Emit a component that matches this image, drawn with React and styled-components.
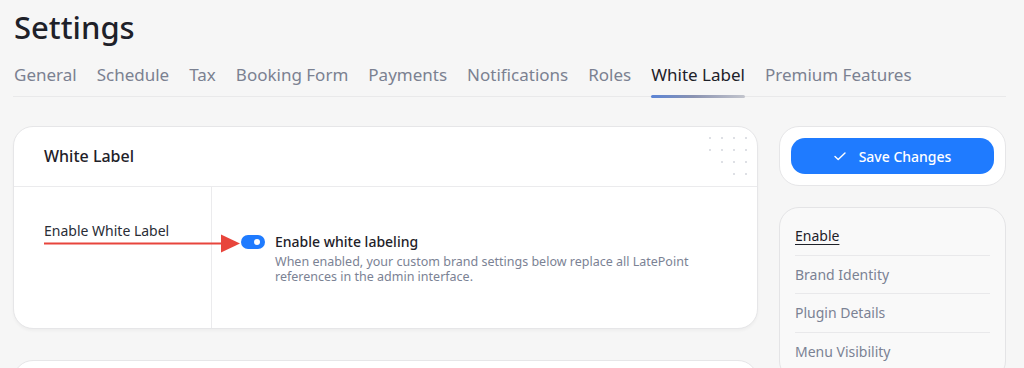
import React from "react";
import styled, { createGlobalStyle } from "styled-components";

const GlobalStyle = createGlobalStyle`
  html, body { margin: 0; padding: 0; }
  body {
    background: #f6f6f6;
    font-family: "Noto Sans", "Open Sans", sans-serif;
    color: #1e2129;
    -webkit-font-smoothing: antialiased;
  }
  * { box-sizing: border-box; }
`;

const Page = styled.div`
  padding: 7px 18px 0 13px;
`;

const Title = styled.h1`
  margin: 0 0 0 1px;
  font-size: 31px;
  line-height: 40px;
  font-weight: 500;
  color: #1e2129;
`;

const TabBar = styled.nav`
  display: flex;
  gap: 20px;
  margin-top: 16px;
  padding-left: 1px;
  border-bottom: 1px solid #e9e9ea;
`;

const Tab = styled.div`
  position: relative;
  font-size: 17px;
  line-height: 24px;
  padding-bottom: 9px;
  color: ${(p) => (p.$active ? "#1e2129" : "#7b8191")};
  font-weight: 400;
  white-space: nowrap;
  &::after {
    content: "";
    display: ${(p) => (p.$active ? "block" : "none")};
    position: absolute;
    left: 0;
    right: 0;
    bottom: -2px;
    height: 3px;
    border-radius: 2px;
    background: linear-gradient(90deg, #5b84d6 0%, #8a93b2 45%, #c3c5cd 100%);
  }
`;

const Layout = styled.div`
  display: grid;
  grid-template-columns: 745px 227px;
  column-gap: 21px;
  margin-top: 29px;
`;

const MainColumn = styled.div`
  display: flex;
  flex-direction: column;
  gap: 31px;
`;

const Card = styled.section`
  position: relative;
  background: #ffffff;
  border: 1px solid #e6e6e8;
  border-radius: 20px;
  box-shadow: 0 2px 3px rgba(0, 0, 0, 0.035);
  min-height: ${(p) => p.$minHeight || "auto"};
`;

const CardHeader = styled.header`
  position: relative;
  height: 60px;
  display: flex;
  align-items: center;
  padding: 0 30px 1px;
  border-bottom: 1px solid #ebebed;
  font-size: 16px;
  font-weight: 500;
  color: #1e2129;
`;

const Dots = styled.svg`
  position: absolute;
  top: 0;
  right: 0;
`;

const CardBody = styled.div`
  position: relative;
  display: grid;
  grid-template-columns: 198px 1fr;
  height: 141px;
`;

const LabelCell = styled.div`
  border-right: 1px solid #ebebed;
  padding: 34px 0 0 30px;
  font-size: 14px;
  line-height: 20px;
  color: #2a2d36;
`;

const FieldCell = styled.div`
  display: flex;
  align-items: center;
  padding: 0 30px 0 29px;
`;

const ToggleRow = styled.div`
  display: flex;
  align-items: flex-start;
  gap: 10px;
  margin-top: 1px;
`;

const Toggle = styled.div`
  position: relative;
  flex: none;
  width: 24px;
  height: 14px;
  margin-top: 3px;
  border-radius: 7px;
  background: #1f7bff;
  &::after {
    content: "";
    position: absolute;
    top: 4px;
    right: 5px;
    width: 6px;
    height: 6px;
    border-radius: 50%;
    background: #ffffff;
  }
`;

const FieldText = styled.div`
  display: flex;
  flex-direction: column;
  gap: 2px;
`;

const FieldTitle = styled.div`
  font-size: 14px;
  line-height: 20px;
  font-weight: 500;
  color: #1e2129;
`;

const FieldDesc = styled.div`
  font-size: 12.5px;
  line-height: 15.5px;
  color: #7b8294;
  max-width: 420px;
`;

const Arrow = styled.svg`
  position: absolute;
  left: 30px;
  top: 47px;
  pointer-events: none;
`;

const SideColumn = styled.aside`
  display: flex;
  flex-direction: column;
  gap: 21px;
`;

const SaveCard = styled.div`
  background: #ffffff;
  border: 1px solid #e6e6e8;
  border-radius: 20px;
  padding: 11px 11px;
`;

const SaveButton = styled.button`
  width: 100%;
  height: 36px;
  border: none;
  border-radius: 14px;
  background: #1f7bff;
  color: #ffffff;
  font-family: inherit;
  font-size: 14px;
  font-weight: 500;
  display: flex;
  align-items: center;
  justify-content: center;
  gap: 13px;
  padding: 0;
  cursor: pointer;
`;

const NavCard = styled.nav`
  background: #f9f9f9;
  border: 1px solid #e4e4e6;
  border-radius: 20px;
  padding: 9px 15px 10px 15px;
`;

const NavItem = styled.div`
  font-size: 14px;
  line-height: 16px;
  padding: 11px 0 10.5px;
  border-bottom: 1px solid #e9e9eb;
  color: ${(p) => (p.$active ? "#1e2129" : "#7b8294")};
  text-decoration: ${(p) => (p.$active ? "underline" : "none")};
  text-underline-offset: 3px;
  text-decoration-thickness: 1px;
  &:last-child { border-bottom: none; }
`;

const tabs = [
  "General",
  "Schedule",
  "Tax",
  "Booking Form",
  "Payments",
  "Notifications",
  "Roles",
  "White Label",
  "Premium Features",
];

const navItems = ["Enable", "Brand Identity", "Plugin Details", "Menu Visibility"];

function DotPattern() {
  const rows = [
    [13, 25, 37, 49],
    [13, 25, 37, 49],
    [25, 37, 49],
    [37, 49],
  ];
  return (
    <Dots width="60" height="60" viewBox="0 0 60 60">
      {rows.map((xs, r) =>
        xs.map((x) => <circle key={`${r}-${x}`} cx={x} cy={11 + r * 12} r="1" fill="#d3d6dc" />)
      )}
    </Dots>
  );
}

export default function App() {
  return (
    <>
      <GlobalStyle />
      <Page>
        <Title>Settings</Title>
        <TabBar>
          {tabs.map((t) => (
            <Tab key={t} $active={t === "White Label"}>
              {t}
            </Tab>
          ))}
        </TabBar>
        <Layout>
          <MainColumn>
            <Card>
              <CardHeader>
                White Label
                <DotPattern />
              </CardHeader>
              <CardBody>
                <LabelCell>Enable White Label</LabelCell>
                <FieldCell>
                  <ToggleRow>
                    <Toggle />
                    <FieldText>
                      <FieldTitle>Enable white labeling</FieldTitle>
                      <FieldDesc>
                        When enabled, your custom brand settings below replace all LatePoint
                        references in the admin interface.
                      </FieldDesc>
                    </FieldText>
                  </ToggleRow>
                </FieldCell>
                <Arrow width="200" height="20" viewBox="0 0 200 20">
                  <line x1="0" y1="9.5" x2="182" y2="9.5" stroke="#e8453c" strokeWidth="2" />
                  <polygon points="177,0.5 196,9.5 177,18.5" fill="#e8453c" />
                </Arrow>
              </CardBody>
            </Card>
            <Card $minHeight="200px" />
          </MainColumn>
          <SideColumn>
            <SaveCard>
              <SaveButton>
                <svg width="12" height="9" viewBox="0 0 12 9">
                  <polyline
                    points="1,4.5 4.2,7.6 11,1"
                    fill="none"
                    stroke="#ffffff"
                    strokeWidth="1.4"
                    strokeLinecap="round"
                    strokeLinejoin="round"
                  />
                </svg>
                Save Changes
              </SaveButton>
            </SaveCard>
            <NavCard>
              {navItems.map((n) => (
                <NavItem key={n} $active={n === "Enable"}>
                  {n}
                </NavItem>
              ))}
            </NavCard>
          </SideColumn>
        </Layout>
      </Page>
    </>
  );
}
